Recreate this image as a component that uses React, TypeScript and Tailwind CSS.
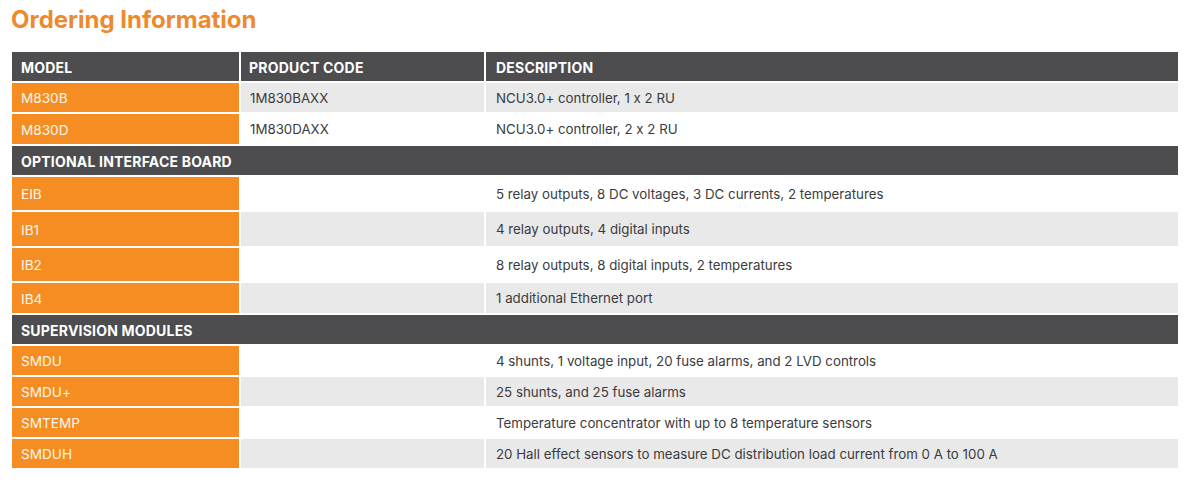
const sans = "font-['Inter','Liberation_Sans',sans-serif] [font-feature-settings:'calt'_0]";

type Row =
  | { kind: 'section'; label: string; h: string }
  | { kind: 'item'; model: string; code: string; desc: string; shade: boolean; h: string };

const rows: Row[] = [
  { kind: 'item', model: 'M830B', code: '1M830BAXX', desc: 'NCU3.0+ controller, 1 x 2 RU', shade: true, h: 'h-[29px]' },
  { kind: 'item', model: 'M830D', code: '1M830DAXX', desc: 'NCU3.0+ controller, 2 x 2 RU', shade: false, h: 'h-[30px]' },
  { kind: 'section', label: 'OPTIONAL INTERFACE BOARD', h: 'h-[29px]' },
  { kind: 'item', model: 'EIB', code: '', desc: '5 relay outputs, 8 DC voltages, 3 DC currents, 2 temperatures', shade: false, h: 'h-[33px]' },
  { kind: 'item', model: 'IB1', code: '', desc: '4 relay outputs, 4 digital inputs', shade: true, h: 'h-[34px]' },
  { kind: 'item', model: 'IB2', code: '', desc: '8 relay outputs, 8 digital inputs, 2 temperatures', shade: false, h: 'h-[33px]' },
  { kind: 'item', model: 'IB4', code: '', desc: '1 additional Ethernet port', shade: true, h: 'h-[30px]' },
  { kind: 'section', label: 'SUPERVISION MODULES', h: 'h-[29px]' },
  { kind: 'item', model: 'SMDU', code: '', desc: '4 shunts, 1 voltage input, 20 fuse alarms, and 2 LVD controls', shade: false, h: 'h-[29px]' },
  { kind: 'item', model: 'SMDU+', code: '', desc: '25 shunts, and 25 fuse alarms', shade: true, h: 'h-[29px]' },
  { kind: 'item', model: 'SMTEMP', code: '', desc: 'Temperature concentrator with up to 8 temperature sensors', shade: false, h: 'h-[29px]' },
  { kind: 'item', model: 'SMDUH', code: '', desc: '20 Hall effect sensors to measure DC distribution load current from 0 A to 100 A', shade: true, h: 'h-[29px]' },
];

export default function App() {
  return (
    <div className={`w-[1204px] h-[482px] bg-white ${sans} overflow-hidden`}>
      <h1 className="pl-[11px] pt-[4px] h-[52px] text-[24px] leading-[32px] font-bold text-[#ee8a2c]">
        Ordering Information
      </h1>
      <div className="ml-[12px] w-[1166px] flex flex-col gap-[2px]">
        {/* header */}
        <div className="grid grid-cols-[227px_243px_1fr] gap-[2px] h-[29px] text-[14px] tracking-[0.2px] font-bold text-white">
          <div className="bg-[#4d4d4f] flex items-center pl-[9px] pt-[2px]">MODEL</div>
          <div className="bg-[#4d4d4f] flex items-center pl-[8px] pt-[2px]">PRODUCT CODE</div>
          <div className="bg-[#4d4d4f] flex items-center pl-[10px] pt-[2px]">DESCRIPTION</div>
        </div>
        {rows.map((r, i) =>
          r.kind === 'section' ? (
            <div
              key={i}
              className={`${r.h} bg-[#4d4d4f] flex items-center pl-[9px] pt-[2px] text-[14px] tracking-[0.2px] font-bold text-white`}
            >
              {r.label}
            </div>
          ) : (
            <div key={i} className={`grid grid-cols-[227px_243px_1fr] gap-[2px] ${r.h} text-[13.3px]`}>
              <div className="bg-[#f58d22] flex items-center pl-[9px] pt-[2px] text-[13.6px] text-[#fff6ea]">{r.model}</div>
              <div className={`${r.shade ? 'bg-[#e9e9ea]' : 'bg-white'} flex items-center pl-[9px] pt-[2px] text-[#3b3b3d]`}>
                {r.code}
              </div>
              <div className={`${r.shade ? 'bg-[#e9e9ea]' : 'bg-white'} flex items-center pl-[10px] pt-[2px] text-[#3b3b3d]`}>
                {r.desc}
              </div>
            </div>
          ),
        )}
      </div>
    </div>
  );
}
